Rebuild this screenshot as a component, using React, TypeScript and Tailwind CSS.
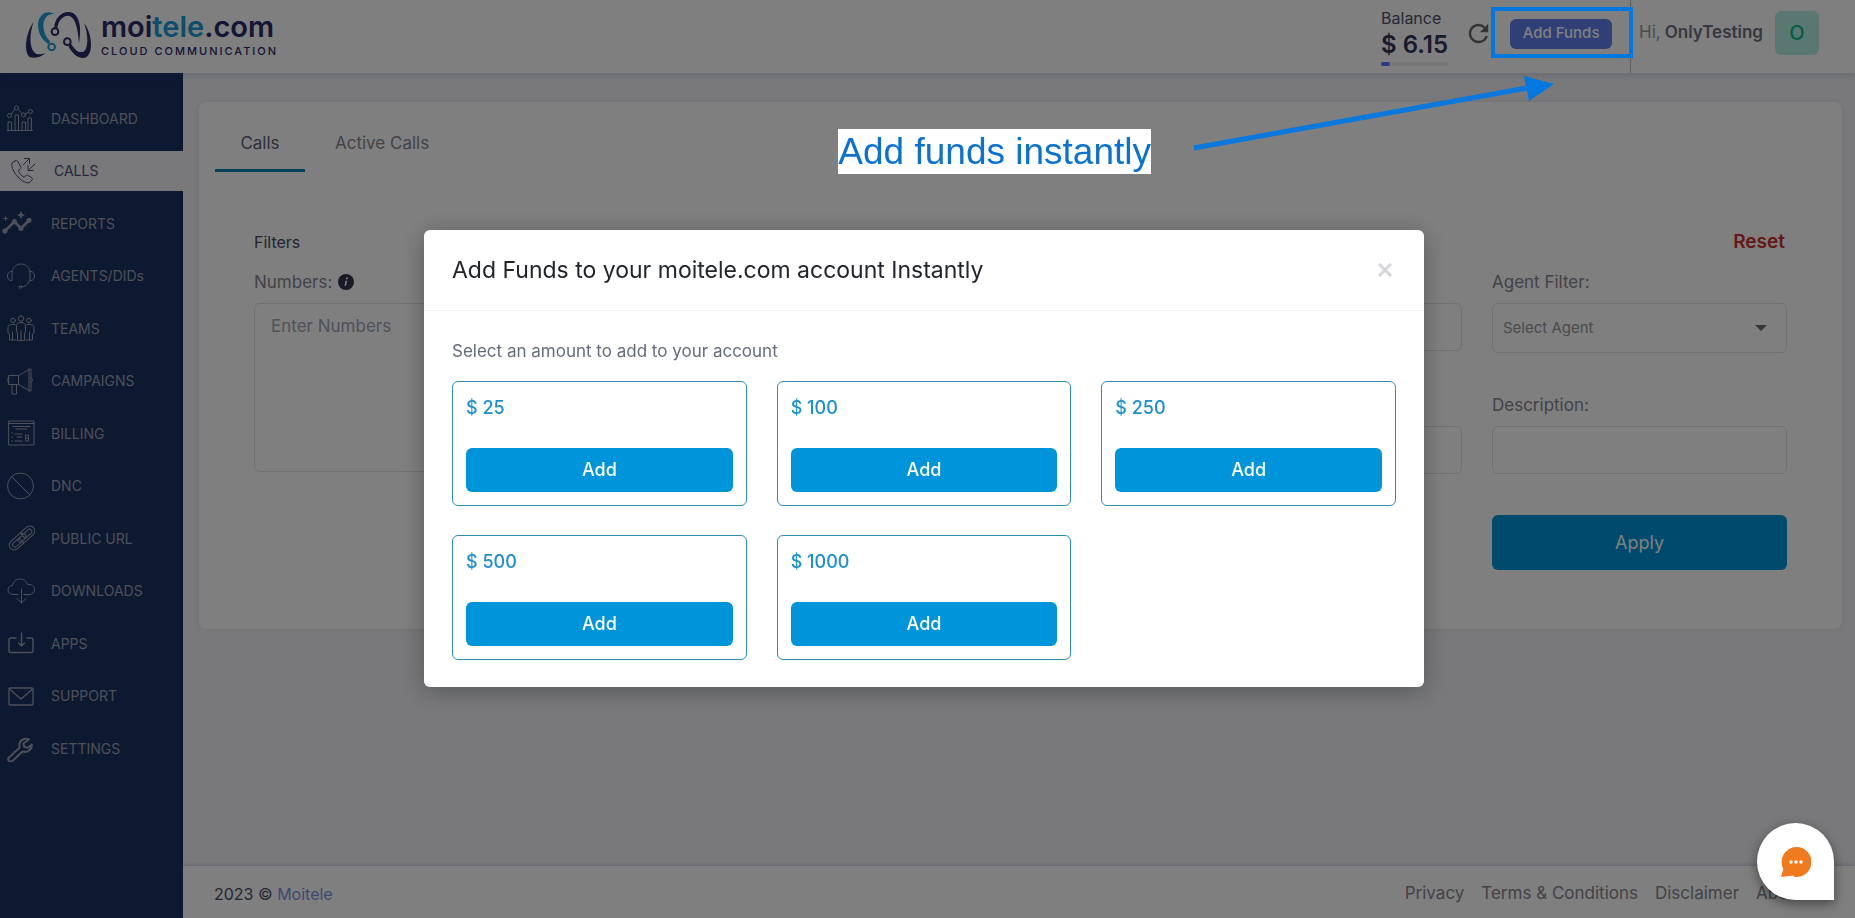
import { ReactNode } from "react";
import { MdInsights, MdRefresh } from "react-icons/md";

const amounts = [25, 100, 250, 500, 1000];

const Icon = ({ children, width = 1 }: { children: ReactNode; width?: number }) => (
  <svg
    viewBox="0 0 28 28"
    className="size-7 shrink-0"
    fill="none"
    stroke="currentColor"
    strokeWidth={width}
    strokeLinecap="round"
    strokeLinejoin="round"
    aria-hidden="true"
  >
    {children}
  </svg>
);

const menu = [
  {
    label: "DASHBOARD",
    icon: (
      <Icon>
        <path d="M-0.500 26.5h26M1 26v-8h3.500v8M8 26V11h3.500v15M15 26v-8h3.500v8M21 26V14h3.500v12" />
        <circle cx="2.500" cy="11.500" r="2" />
        <circle cx="9.500" cy="4" r="2" />
        <circle cx="16.500" cy="11" r="2" />
        <circle cx="23.500" cy="7.500" r="2" />
        <path d="M4 10l4-4.500M11 5.500l4 4M18.300 10l3.500-2" />
      </Icon>
    ),
  },
  {
    label: "CALLS",
    active: true,
    icon: (
      <Icon>
        <path d="M5 4l-3 2c-2 6 8 20 17 20l3-3c.6-.8.500-1.700-.3-2.300l-4-2.500c-.8-.4-1.600-.2-2.100.4l-1.300 1.700c-3-1.300-5.300-4.300-6-7l2-1.300c.7-.5.8-1.200.5-2L8 5c-.7-1.400-1.700-2-3-1z" />
        <path d="M13 8l6-6M14.500 1.500h5v5M25 7l-7 6.500M18 8.500v5h5" />
      </Icon>
    ),
  },
  { label: "REPORTS", icon: <MdInsights className="-ml-1.5 mr-0.5 size-8 shrink-0" /> },
  {
    label: "AGENTS/DIDs",
    icon: (
      <Icon>
        <path d="M5 9.500c1-4.500 4.500-7.500 9-7.500s8 3 9 7.500M5 9.500v9C2.500 19 .500 17 .500 14S2.500 9 5 9.500zM23 9.500v9c2.500.5 4.500-1.500 4.500-4.500s-2-5-4.500-4.500zM22.500 18.500c-1.500 4-4 6-8 6.500" />
        <path d="M12.500 24h2v2h-2z" />
      </Icon>
    ),
  },
  {
    label: "TEAMS",
    icon: (
      <Icon>
        <circle cx="14" cy="4.500" r="2.700" />
        <circle cx="6" cy="6.500" r="2.300" />
        <circle cx="22" cy="6.500" r="2.300" />
        <path d="M10.500 26V19l-1-1v-6c0-2 1.500-3.500 3.500-3.500h2c2 0 3.500 1.500 3.500 3.500v6l-1 1v7zM14 17v9M8 10.500H4.500c-2 0-3.500 1-3.500 3V19l1.500 1v6H9M5.500 18v8M20 10.500h3.500c2 0 3.500 1 3.500 3V19l-1.500 1v6H19M22.500 18v8" />
      </Icon>
    ),
  },
  {
    label: "CAMPAIGNS",
    icon: (
      <Icon>
        <path d="M2 8.500h9.500v9H2zM11.500 8.500L22 2.500v21l-10.500-6M22 2h2v22h-2M24 11c2 0 2 4 0 4M5 17.500V27h4.500v-9.500M2 10.500H1v5h1" />
      </Icon>
    ),
  },
  {
    label: "BILLING",
    icon: (
      <Icon>
        <path d="M2 2h25v24H2zM2 4.500h25M6 7.500h17M9 10h11M4.500 14h1M4.500 18h1M4.500 22h1M8 15h7M10 18h5M8 22h7M19 16h2.500v6H19zM19 19h2.500" />
      </Icon>
    ),
  },
  {
    label: "DNC",
    icon: (
      <Icon>
        <circle cx="13.500" cy="14" r="13" />
        <path d="M4.500 4.500l18.500 18.500" />
      </Icon>
    ),
  },
  {
    label: "PUBLIC URL",
    icon: (
      <Icon>
        <g transform="rotate(-42 15 14)">
          <path d="M13 19H4.500a5 5 0 0 1 0-10H15a5 5 0 0 1 4.500 6.500h-3A2.200 2.200 0 0 0 15 12H5a2.200 2.200 0 0 0 0 4.500h8z" />
          <path d="M17 9h8.500a5 5 0 0 1 0 10H15a5 5 0 0 1-4.500-6.500h3A2.200 2.200 0 0 0 15 16.500h10a2.200 2.200 0 0 0 0-4.500h-8z" />
        </g>
      </Icon>
    ),
  },
  {
    label: "DOWNLOADS",
    icon: (
      <Icon>
        <path d="M11 17.500H6c-3 0-5-2-5-4.500s2-4.500 4.500-4.500C6 5 9 2 13 2c3.500 0 6.500 2 7.500 5.500 4-.5 7 1.500 7 5s-2.500 5-5.500 5h-5M14.500 12v14M10 21.500l4.500 4.500 4.500-4.500" />
      </Icon>
    ),
  },
  {
    label: "APPS",
    icon: (
      <Icon width={1.400}>
        <path d="M9 9H4a2 2 0 0 0-2 2v10.500a2 2 0 0 0 2 2h20a2 2 0 0 0 2-2V11a2 2 0 0 0-2-2h-4M14.500 4v13M11.500 14l3 3 3-3" />
      </Icon>
    ),
  },
  {
    label: "SUPPORT",
    icon: (
      <Icon width={1.300}>
        <rect x="2" y="6" width="24" height="17" rx="1" />
        <path d="M2.500 7l11.500 10L25.500 7" />
      </Icon>
    ),
  },
  {
    label: "SETTINGS",
    icon: (
      <Icon width={2}>
        <path d="M22 5.500c-4-2-8.500 0-9.500 4-.3 1.600-.2 2.700.2 4L2 23.500c-1.200 1.300-1 2.700 0 3.500s2.500.8 3.700-.3l9.800-9.200c5 1.500 9.500-2 9.300-7l-4 3.200-3.700-1-.6-3.400z" />
      </Icon>
    ),
  },
];

const Logo = () => (
  <a href="#" className="flex items-center gap-[9px] pb-1">
    <svg viewBox="78 30 198 144" className="h-12 w-[66px]" fill="none" aria-hidden="true">
      <path d="M101 62C72 105 72 162 92 169c12 4 30 0 46-14-18 8-30 6-36-2-14-16-14-54-1-91z" fill="#2b2a6a" />
      <path d="M163 39c-28-16-50 8-49 36 1 24 14 42 31 54l6-7c-12-12-20-27-21-45-1-25 13-40 33-38z" fill="#1b9cd8" />
      <circle cx="155" cy="138" r="10" stroke="#1b9cd8" strokeWidth="6" />
      <circle cx="165" cy="92" r="10" stroke="#2b2a6a" strokeWidth="6" />
      <path d="M163 80c0-26 20-48 44-47 28 1 40 38 30 94-3-44-11-82-33-83-17 0-30 17-32 38z" fill="#2b2a6a" />
      <circle cx="202" cy="122" r="10" stroke="#2b2a6a" strokeWidth="6" />
      <path d="M205 134c9 20 26 37 44 37 32-1 31-70 3-105 14 35 13 80-2 86-15 6-28-9-37-24z" fill="#2b2a6a" />
    </svg>
    <span className="flex flex-col">
      <span className="text-[29px] leading-7 font-semibold text-[#2b2a6a]">
        moi<span className="text-[#1b9cd8]">tele</span>.com
      </span>
      <span className="mt-1 text-[11px] leading-3 font-medium tracking-[2px] text-[#2b2a6a]">CLOUD COMMUNICATION</span>
    </span>
  </a>
);

const Header = () => (
  <header className="z-10 flex h-[73px] items-center bg-white pr-9 pl-[26px] shadow-[0_2px_8px_rgba(80,90,120,0.2)]">
    <Logo />
    <div className="ml-auto flex h-full items-center">
      <div className="flex flex-col">
        <span className="text-[16px] leading-5 text-[#4d5066]">Balance</span>
        <span className="text-[24px] leading-[34px] font-semibold text-[#32345a]">$ 6.15</span>
        <span className="flex h-1 bg-[#f0f0f5]">
          <span className="w-[9px] rounded-sm bg-[#5d78ff]" />
        </span>
      </div>
      <button type="button" aria-label="Refresh balance" className="mb-1.5 ml-4 text-[#666]">
        <MdRefresh className="size-[29px]" />
      </button>
      <button
        type="button"
        className="mb-1.5 ml-[17px] h-[30px] w-[102px] rounded-md bg-[#6080ee] text-[15px] font-medium whitespace-nowrap text-white"
      >
        Add Funds
      </button>
      <div className="ml-[18px] flex h-full items-center border-l border-[#b8b8c4] pb-[7px] pl-2 text-[17px]">
        <span className="text-[#95969f]">Hi,</span>
        <span className="ml-1 font-semibold text-[#6c6e80]">OnlyTesting</span>
        <span className="ml-3 flex size-11 items-center justify-center rounded-md bg-[#b5efe4] text-[20px] font-medium text-[#0abb87]">
          O
        </span>
      </div>
    </div>
  </header>
);

const Sidebar = () => (
  <aside className="w-[183px] shrink-0 bg-[#1b3162] pt-[25px]">
    <nav className="flex h-[670px] flex-col justify-between">
      {menu.map((item) => (
        <a
          key={item.label}
          href="#"
          className={
            item.active
              ? "flex h-10 items-center gap-4 bg-[#f2f3f8] pl-[10px] text-[14px] text-[#4a4e72]"
              : "flex h-10 items-center gap-4 pl-[7px] text-[14px] text-[#9a9fb2]"
          }
        >
          {item.icon}
          {item.label}
        </a>
      ))}
    </nav>
  </aside>
);

const field = "w-full rounded-md border border-[#e2e3ea] bg-white";
const labelText = "text-[17px] leading-6 text-[#86868f]";

const Filters = () => (
  <form className="px-[55px] pt-[58px]">
    <div className="flex items-center justify-between leading-6">
      <h3 className="text-[16px] text-[#484a5a]">Filters</h3>
      <button type="reset" className="pr-0.5 text-[19px] font-semibold text-[#c8322f]">
        Reset
      </button>
    </div>
    <div className="mt-4 flex gap-[30px]">
      <div className="flex flex-1 flex-col">
        <label htmlFor="numbers" className={`${labelText} flex items-center gap-1.5`}>
          Numbers:
          <svg viewBox="0 0 16 16" className="size-4" aria-hidden="true">
            <circle cx="8" cy="8" r="8" fill="#32344a" />
            <path d="M7.500 6.800h1.600l-1 5h-1.600zM8 3.500h1.800v1.800H8z" fill="#fff" />
          </svg>
        </label>
        <textarea
          id="numbers"
          placeholder="Enter Numbers"
          className={`${field} mt-[9px] h-[169px] resize-none px-4 py-2.5 text-[17px] leading-6 placeholder:text-[#a2a5b5]`}
        />
      </div>
      <div className="grid w-[945px] grid-cols-3 gap-x-[30px]">
        <div className="col-span-2 grid grid-cols-2 content-start gap-x-[30px] gap-y-[75px] pt-[33px]">
          <input aria-label="Start date" className={`${field} h-12`} />
          <input aria-label="End date" className={`${field} h-12`} />
          <input aria-label="Duration" className={`${field} h-12`} />
          <input aria-label="Disposition" className={`${field} h-12`} />
        </div>
        <div className="flex flex-col">
          <label htmlFor="agent" className={labelText}>
            Agent Filter:
          </label>
          <div className="relative mt-[9px]">
            <select id="agent" className={`${field} h-[50px] appearance-none px-2.5 text-[15px] text-[#95969f]`}>
              <option>Select Agent</option>
            </select>
            <svg
              viewBox="0 0 12 6"
              className="pointer-events-none absolute top-[22px] right-5 h-1.5 w-3"
              fill="#6c6e78"
              aria-hidden="true"
            >
              <path d="M0 0h12L6 6z" />
            </svg>
          </div>
          <label htmlFor="description" className={`${labelText} mt-10`}>
            Description:
          </label>
          <input id="description" className={`${field} mt-[9px] h-12`} />
          <button type="button" className="mt-[41px] h-[55px] rounded-md bg-[#0095da] text-[18px] text-white">
            Apply
          </button>
        </div>
      </div>
    </div>
  </form>
);

const Footer = () => (
  <footer className="flex h-[52px] items-center bg-white pr-[51px] pl-[31px] text-[16px] shadow-[0_-1px_4px_rgba(80,90,120,0.25)]">
    <p className="pt-1 text-[#484a5a]">
      2023 ©{" "}
      <a href="#" className="text-[#7f90e6]">
        Moitele
      </a>
    </p>
    <nav className="ml-auto flex gap-[17px] pt-1 text-[17px] text-[#86868f]">
      <a href="#">Privacy</a>
      <a href="#">Terms &amp; Conditions</a>
      <a href="#">Disclaimer</a>
      <a href="#">About</a>
    </nav>
  </footer>
);

const AddFundsModal = () => (
  <div className="fixed inset-0 z-20 flex items-start justify-center bg-black/50 pt-[230px] pr-[7px]">
    <div
      role="dialog"
      aria-labelledby="add-funds-title"
      className="w-full max-w-[1000px] rounded-md bg-white shadow-[0_4px_24px_rgba(0,0,0,0.3)]"
    >
      <div className="flex h-[81px] items-center justify-between border-b border-[#f1f2f5] px-7">
        <h2 id="add-funds-title" className="text-[23px] text-[#212529]">
          Add Funds to your moitele.com account Instantly
        </h2>
        <button type="button" aria-label="Close" className="p-1 text-[#d6d6da]">
          <svg viewBox="0 0 14 14" className="size-3.5" stroke="currentColor" strokeWidth="3" aria-hidden="true">
            <path d="M1 1l12 12M13 1L1 13" />
          </svg>
        </button>
      </div>
      <div className="px-7 pt-7 pb-[27px]">
        <p className="text-[17px] leading-6 text-[#646c7a]">Select an amount to add to your account</p>
        <div className="mt-[18px] grid grid-cols-3 gap-x-[30px] gap-y-[29px]">
          {amounts.map((amount) => (
            <div key={amount} className="flex flex-col rounded-md border border-[#2a90b0] p-[13px]">
              <span className="text-[18px] leading-[26px] font-medium text-[#1a90cc]">$ {amount}</span>
              <button
                type="button"
                className="mt-[27px] h-11 rounded-md bg-[#0095da] pb-0.5 text-[18px] font-medium text-white"
              >
                Add
              </button>
            </div>
          ))}
        </div>
      </div>
    </div>
  </div>
);

// callout box, label and arrow drawn above the dimmed page
const Callout = () => (
  <div className="pointer-events-none">
    <div className="absolute top-[7px] right-[222px] z-30 h-[51px] w-[142px] border-4 border-[#0078e0]" />
    <p className="absolute top-[129px] right-[704px] z-30 bg-white font-['Liberation_Sans',Arial,sans-serif] text-[37px] leading-[45px] whitespace-nowrap text-[#0a72d2]">
      Add funds instantly
    </p>
    <svg viewBox="0 0 362 76" className="absolute top-[76px] right-[300px] z-30 h-[76px] w-[362px]" aria-hidden="true">
      <path d="M1 72L334 12" stroke="#0a78dc" strokeWidth="5" />
      <path d="M331 0l30 8-25 17z" fill="#0078e0" />
    </svg>
  </div>
);

const ChatButton = () => (
  <button
    type="button"
    aria-label="Open chat"
    className="fixed right-[21px] bottom-[18px] z-30 flex size-[77px] items-center justify-center rounded-full rounded-br-lg bg-white shadow-[0_4px_12px_rgba(0,0,0,0.45)]"
  >
    <svg viewBox="0 0 30 30" className="size-[30px]" aria-hidden="true">
      <path d="M15 0a15 15 0 1 1-2 29.800c-.5 0-.4-.8-.4-1.300L0 30l2.300-8A15 15 0 0 1 15 0z" fill="#f07a1e" />
      <circle cx="10" cy="15" r="1.700" fill="#fff" />
      <circle cx="15" cy="15" r="1.700" fill="#fff" />
      <circle cx="20" cy="15" r="1.700" fill="#fff" />
    </svg>
  </button>
);

export default function App() {
  return (
    <div className="relative flex min-h-screen flex-col bg-[#f2f3f8] font-[Inter,sans-serif]">
      <Header />
      <div className="flex flex-1">
        <Sidebar />
        <div className="flex min-w-0 flex-1 flex-col">
          <main className="flex-1 pt-[29px] pr-[13px] pb-6 pl-4">
            <section className="rounded-lg bg-white pb-[59px] shadow-[0_0_6px_rgba(80,90,120,0.1)]">
              <div role="tablist" className="flex px-4 pt-[27px] text-[17px]">
                <button
                  type="button"
                  role="tab"
                  aria-selected="true"
                  className="h-[43px] w-[90px] border-b-[3px] border-[#0e86b4] pb-2.5 text-[#5c5f70]"
                >
                  Calls
                </button>
                <button
                  type="button"
                  role="tab"
                  aria-selected="false"
                  className="ml-[30px] h-[43px] border-b-[3px] border-transparent pb-2.5 text-[#86868f]"
                >
                  Active Calls
                </button>
              </div>
              <Filters />
            </section>
          </main>
          <Footer />
        </div>
      </div>
      <AddFundsModal />
      <Callout />
      <ChatButton />
    </div>
  );
}
